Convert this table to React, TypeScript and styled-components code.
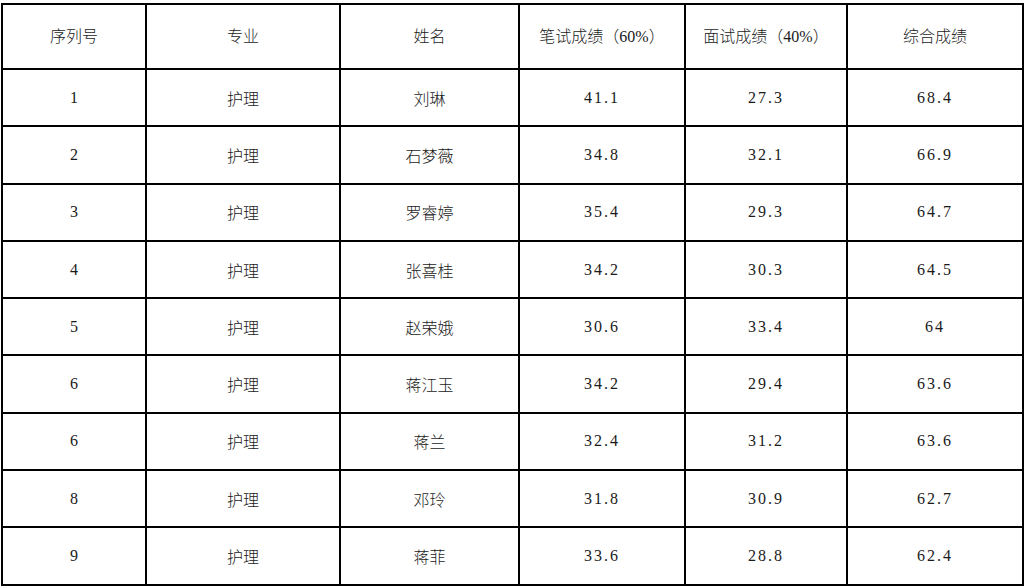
import React from 'react'
import styled, { createGlobalStyle } from 'styled-components'

const GlobalStyle = createGlobalStyle`
    html, body {
        margin: 0;
        padding: 0;
        background: #fff;
    }
`

const Page = styled.div`
    width: 1026px;
    height: 588px;
    padding: 3px 0 0 1px;
    box-sizing: border-box;
    background: #fff;
    overflow: hidden;
`

const Table = styled.table`
    width: 1021px;
    border-collapse: collapse;
    table-layout: fixed;

    font-family: "Liberation Serif", "Noto Sans CJK SC", serif;
    font-size: 16px;
    font-weight: 300;
    color: #1a1a1a;
`

const HeadCell = styled.th`
    height: 59px;
    padding: 0 0 4px;
    border: 2px solid #000;
    font-weight: 300;
    text-align: center;
    vertical-align: middle;
`

const Cell = styled.td<{ $score?: boolean }>`
    height: 55.3px;
    padding: 0;
    border: 2px solid #000;
    text-align: center;
    vertical-align: middle;
    letter-spacing: ${p => (p.$score ? '2px' : '0')};
`

const columns = [
    { title: '序列号', width: 144 },
    { title: '专业', width: 194 },
    { title: '姓名', width: 179 },
    { title: '笔试成绩（60%）', width: 166 },
    { title: '面试成绩（40%）', width: 162 },
    { title: '综合成绩', width: 176 },
]

const rows = [
    ['1', '护理', '刘琳', '41.1', '27.3', '68.4'],
    ['2', '护理', '石梦薇', '34.8', '32.1', '66.9'],
    ['3', '护理', '罗睿婷', '35.4', '29.3', '64.7'],
    ['4', '护理', '张喜桂', '34.2', '30.3', '64.5'],
    ['5', '护理', '赵荣娥', '30.6', '33.4', '64'],
    ['6', '护理', '蒋江玉', '34.2', '29.4', '63.6'],
    ['6', '护理', '蒋兰', '32.4', '31.2', '63.6'],
    ['8', '护理', '邓玲', '31.8', '30.9', '62.7'],
    ['9', '护理', '蒋菲', '33.6', '28.8', '62.4'],
]

export default function App() {
    return (
        <Page>
            <GlobalStyle />
            <Table>
                <colgroup>
                    {columns.map(c => (
                        <col key={c.title} style={{ width: c.width }} />
                    ))}
                </colgroup>
                <thead>
                    <tr>
                        {columns.map(c => (
                            <HeadCell key={c.title}>{c.title}</HeadCell>
                        ))}
                    </tr>
                </thead>
                <tbody>
                    {rows.map((r, i) => (
                        <tr key={i}>
                            {r.map((v, j) => (
                                <Cell key={j} $score={j >= 3}>{v}</Cell>
                            ))}
                        </tr>
                    ))}
                </tbody>
            </Table>
        </Page>
    )
}
